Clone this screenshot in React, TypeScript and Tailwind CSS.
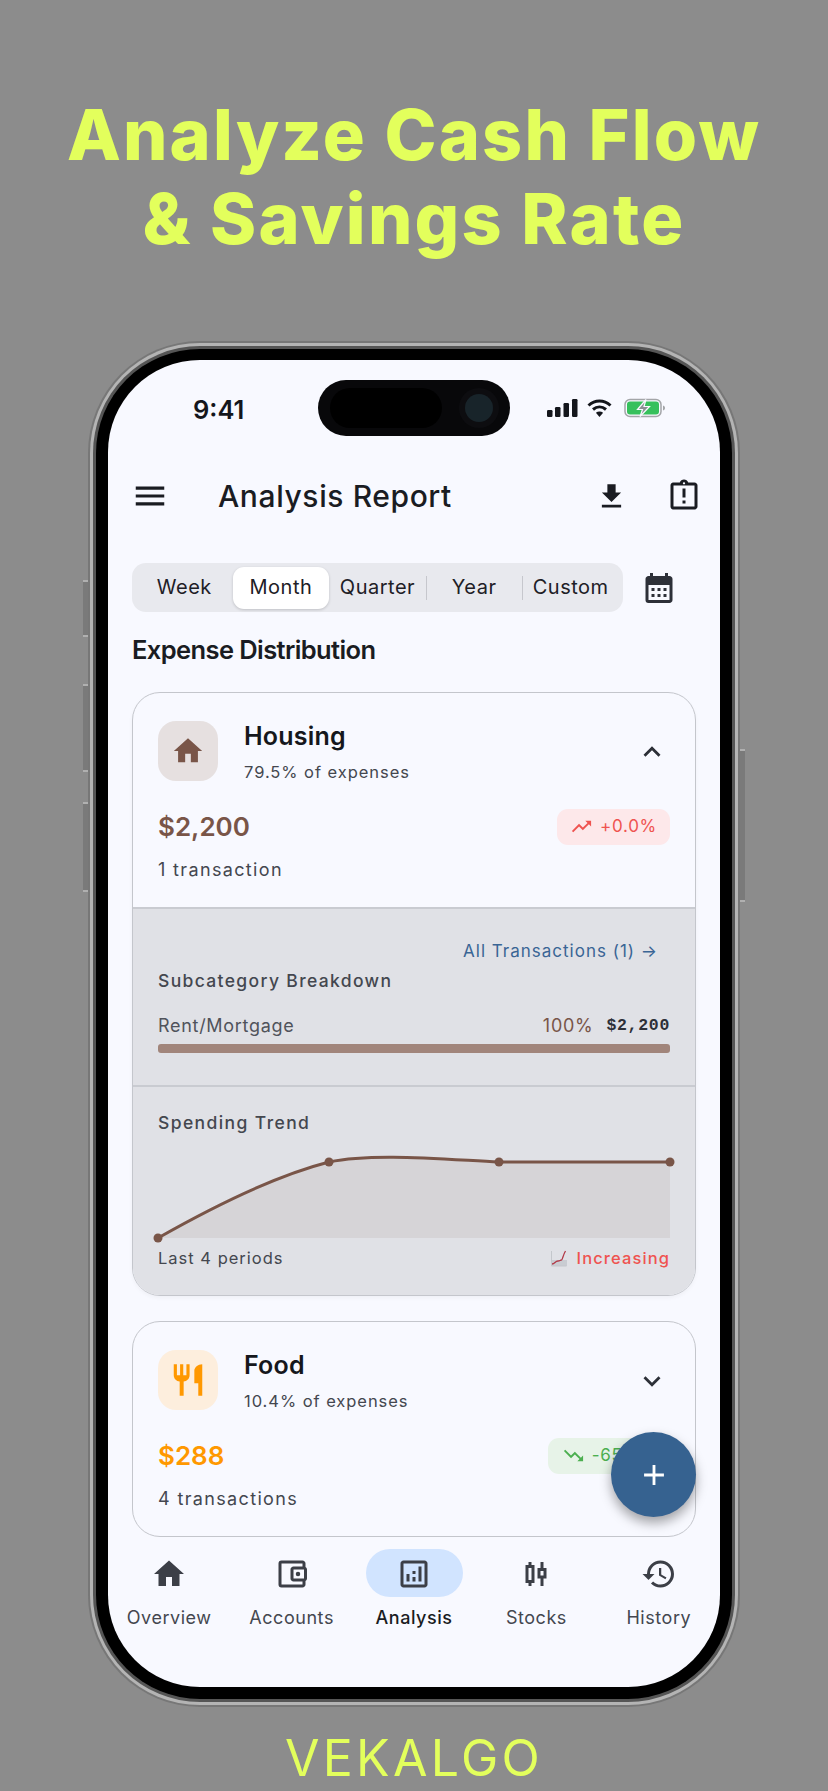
import React from 'react';
import {
  MdAdd,
  MdCalendarMonth,
  MdFileDownload,
  MdHistory,
  MdHome,
  MdKeyboardArrowDown,
  MdKeyboardArrowUp,
  MdMenu,
  MdOutlineAccountBalanceWallet,
  MdOutlineAnalytics,
  MdOutlineAssignmentLate,
  MdOutlineCandlestickChart,
  MdRestaurant,
  MdTrendingDown,
  MdTrendingUp,
} from 'react-icons/md';

const periods = ['Week', 'Month', 'Quarter', 'Year', 'Custom'];

const navItems = [
  { label: 'Overview', icon: MdHome },
  { label: 'Accounts', icon: MdOutlineAccountBalanceWallet },
  { label: 'Analysis', icon: MdOutlineAnalytics, active: true },
  { label: 'Stocks', icon: MdOutlineCandlestickChart },
  { label: 'History', icon: MdHistory },
];

const StatusIcons = () => (
  <div className="flex items-center gap-[8px]">
    <svg width="31" height="20" viewBox="0 0 31 20" fill="#14161c">
      <rect x="0" y="12" width="5.500" height="7" rx="1.200" />
      <rect x="8" y="9" width="5.500" height="10" rx="1.200" />
      <rect x="16.500" y="5" width="5.500" height="14" rx="1.200" />
      <rect x="25" y="1" width="5.500" height="18" rx="1.200" />
    </svg>
    <svg width="27" height="20" viewBox="0 0 26 20" fill="none" stroke="#14161c" strokeWidth="3">
      <path d="M2 7.500C8.500 1.500 17.500 1.500 24 7.500" />
      <path d="M6.500 11.500C10.500 8 15.500 8 19.500 11.500" />
      <path d="M13 19l-3.600-4.200c2.200-1.600 5-1.600 7.200 0z" fill="#14161c" stroke="none" />
    </svg>
    <svg width="42" height="20" viewBox="0 0 42 20" className="ml-[3px]">
      <rect x="1" y="1.500" width="36" height="17" rx="5" fill="none" stroke="#a3a5a8" strokeWidth="1.500" />
      <rect x="3" y="3.500" width="32" height="13" rx="3" fill="#36c05c" />
      <path d="M39 7.500c1.500.4 2 1.300 2 2.500s-.5 2.100-2 2.500z" fill="#a3a5a8" />
      <path d="M22 1.500 13.500 11.500h5L16 18.500 25.500 8.500h-5.500z" fill="#8d9096" stroke="#f8f9ff" strokeWidth="1.200" />
    </svg>
  </div>
);

const TrendChart = () => (
  <svg width="512" height="90" viewBox="0 0 512 90" className="block overflow-visible">
    <path d="M0 88C60 54 120 25 171 12C215 3 280 9 341 12L512 12V88Z" fill="#d6d4d7" />
    <path d="M0 88C60 54 120 25 171 12C215 3 280 9 341 12L512 12" fill="none" stroke="#795548" strokeWidth="3" />
    <circle cx="0" cy="88" r="4.500" fill="#795548" />
    <circle cx="171" cy="12" r="4.500" fill="#795548" />
    <circle cx="341" cy="12" r="4.500" fill="#795548" />
    <circle cx="512" cy="12" r="4.500" fill="#795548" />
  </svg>
);

const ChartEmoji = () => (
  <svg width="18" height="18" viewBox="0 0 18 18" className="mr-[9px] ml-auto">
    <rect x="2" y="11" width="15" height="6" fill="#c9ccd2" />
    <path d="M2 15c3 0 3-3 6-3 2 0 2-1 3.500-1 1 0 1.500-5 4-9" fill="none" stroke="#b23a48" strokeWidth="1.300" />
    <path d="M1.500 2v15h15" fill="none" stroke="#c4c7cc" strokeWidth="1" />
  </svg>
);

export default function App() {
  return (
    <div className="flex h-[1791px] w-[828px] flex-col items-center overflow-hidden bg-[#8c8c8c] font-['Inter',sans-serif]">
      <h1 className="mt-[93px] text-center text-[70px] leading-[84px] font-extrabold tracking-[2.2px] whitespace-nowrap text-[#e3ff5c]">
        Analyze Cash Flow
        <br />
        &amp; Savings Rate
      </h1>

      {/* phone frame */}
      <div className="relative mt-[80px] h-[1366px] w-[652px] rounded-[112px] bg-[#777777] p-[2px]">
        <div className="absolute top-[239px] -left-[5px] h-[57px] w-[5px] border-y-2 border-[#b0b0b0] bg-[#7a7a7a]" />
        <div className="absolute top-[343px] -left-[5px] h-[88px] w-[5px] border-y-2 border-[#b0b0b0] bg-[#7a7a7a]" />
        <div className="absolute top-[461px] -left-[5px] h-[90px] w-[5px] border-y-2 border-[#b0b0b0] bg-[#7a7a7a]" />
        <div className="absolute top-[408px] -right-[5px] h-[153px] w-[5px] border-y-2 border-[#b0b0b0] bg-[#7a7a7a]" />
        <div className="h-full rounded-[110px] bg-[#b4b4b4] p-[3px]">
          <div className="h-full rounded-[107px] bg-[#555555] p-[3px]">
            <div className="h-full rounded-[104px] bg-black px-[12px] pt-[11px] pb-[12px]">
              <div className="relative flex h-full flex-col overflow-hidden rounded-[92px] bg-[#f8f9ff]">
                {/* status bar */}
                <div className="relative mt-[20px] flex h-[56px] shrink-0 items-center justify-center">
                  <span className="absolute top-[15px] left-[85px] text-[25.5px] leading-[30px] font-semibold text-[#14161c]">9:41</span>
                  <div className="flex h-[56px] w-[192px] items-center justify-between rounded-[28px] bg-[#08080a] pr-[8px] pl-[12px]">
                    <div className="h-[40px] w-[112px] rounded-[20px] bg-black" />
                    <div className="mr-[9px] h-[28px] w-[28px] rounded-full bg-[#18242a] ring-[6px] ring-[#0d0d10]" />
                  </div>
                  <div className="absolute top-[18px] left-[439px]">
                    <StatusIcons />
                  </div>
                </div>

                {/* app bar */}
                <div className="mt-[30px] flex h-[60px] shrink-0 items-center text-[#1a1c22]">
                  <MdMenu className="ml-[23px] text-[38px]" />
                  <span className="ml-[49px] text-[30px] font-medium tracking-[0.6px]">Analysis Report</span>
                  <MdFileDownload className="ml-auto text-[33px]" />
                  <MdOutlineAssignmentLate className="mr-[18px] ml-[38px] text-[36px]" />
                </div>

                {/* period selector */}
                <div className="mt-[37px] flex shrink-0 items-center px-[24px]">
                  <div className="flex h-[49px] w-[491px] items-center rounded-[14px] bg-[#e8e9ee] px-[4px]">
                    {periods.map((p, i) => (
                      <div key={p} className="relative flex flex-1 items-center justify-center">
                        <div
                          className={`flex h-[42px] w-full items-center justify-center rounded-[11px] pb-[2px] text-[20px] tracking-[0.5px] text-[#1e2026] ${
                            p === 'Month' ? 'bg-white shadow-[0_1px_3px_rgba(0,0,0,0.18)]' : ''
                          }`}
                        >
                          {p}
                        </div>
                        {i > 2 && <div className="absolute left-0 h-[24px] w-px bg-[#c6c7cd]" />}
                      </div>
                    ))}
                  </div>
                  <MdCalendarMonth className="ml-[18px] text-[36px] text-[#2d3038]" />
                </div>

                <div className="mt-[22px] shrink-0 px-[24px] text-[25.5px] leading-[32px] font-semibold tracking-[-0.6px] text-[#1a1c22]">
                  Expense Distribution
                </div>

                {/* scrolling list */}
                <div className="mt-[26px] flex min-h-0 flex-1 flex-col gap-[25px] overflow-hidden px-[24px]">
                  <div className="h-[604px] shrink-0 overflow-hidden rounded-[28px] border border-[#c4c6cc] shadow-[0_2px_4px_rgba(0,0,0,0.04)]">
                    <div className="h-[214px] px-[25px] pt-[27px]">
                      <div className="flex items-center">
                        <div className="flex h-[60px] w-[60px] items-center justify-center rounded-[18px] bg-[#e6e0e0]">
                          <MdHome className="text-[34px] text-[#795548]" />
                        </div>
                        <div className="ml-[26px]">
                          <div className="text-[25px] leading-[32px] font-semibold tracking-[0.2px] text-[#15171c]">Housing</div>
                          <div className="mt-[10px] text-[16.5px] leading-[20px] tracking-[0.95px] text-[#44474f]">79.5% of expenses</div>
                        </div>
                        <MdKeyboardArrowUp className="mt-[2px] mr-[1px] ml-auto text-[34px] text-[#2d3038]" />
                      </div>
                      <div className="mt-[25px] flex items-center justify-between">
                        <span className="text-[26px] font-semibold text-[#795548]">$2,200</span>
                        <div className="flex h-[36px] w-[113px] items-center justify-center gap-[7px] rounded-[11px] bg-[#fde8ea] text-[17px] tracking-[0.7px] text-[#ef5350]">
                          <MdTrendingUp className="text-[23px]" />
                          +0.0%
                        </div>
                      </div>
                      <div className="mt-[12px] text-[18px] leading-[24px] tracking-[1.35px] text-[#44474f]">1 transaction</div>
                    </div>

                    <div className="h-[178px] border-t-2 border-[#c9cbd1] bg-[#e0e1e6] px-[25px]">
                      <div className="mt-[31px] flex justify-end pr-[12px] text-[17px] leading-[22px] tracking-[1px] text-[#3a6595]">
                        All Transactions (1) →
                      </div>
                      <div className="mt-[8px] text-[17.5px] leading-[22px] font-medium tracking-[1.35px] text-[#44474f]">Subcategory Breakdown</div>
                      <div className="mt-[23px] flex items-center text-[18px] leading-[22px] tracking-[0.7px] text-[#50535b]">
                        <span>Rent/Mortgage</span>
                        <span className="ml-auto text-[#795548]">100%</span>
                        <span className="ml-[13px] font-['Liberation_Mono',monospace] text-[16.5px] font-bold text-[#2d3038]">$2,200</span>
                      </div>
                      <div className="mt-[7px] h-[9px] rounded-[3px] bg-[#a1857b]" />
                    </div>

                    <div className="h-[210px] border-t-2 border-[#c9cbd1] bg-[#e0e1e6] px-[25px]">
                      <div className="mt-[25px] text-[17.5px] leading-[22px] font-medium tracking-[1.4px] text-[#44474f]">Spending Trend</div>
                      <div className="mt-[16px]">
                        <TrendChart />
                      </div>
                      <div className="mt-[6px] flex items-center text-[16.5px] leading-[24px] tracking-[1px] text-[#44474f]">
                        <span>Last 4 periods</span>
                        <ChartEmoji />
                        <span className="font-medium tracking-[1.1px] text-[#ef5350]">Increasing</span>
                      </div>
                    </div>
                  </div>

                  <div className="h-[216px] shrink-0 rounded-[28px] border border-[#c4c6cc] px-[25px] pt-[27px]">
                    <div className="flex items-center">
                      <div className="flex h-[60px] w-[60px] items-center justify-center rounded-[18px] bg-[#fdeedd]">
                        <MdRestaurant className="text-[38px] text-[#ff9800]" />
                      </div>
                      <div className="ml-[26px]">
                        <div className="text-[25px] leading-[32px] font-semibold tracking-[0.2px] text-[#15171c]">Food</div>
                        <div className="mt-[10px] text-[16.5px] leading-[20px] tracking-[0.95px] text-[#44474f]">10.4% of expenses</div>
                      </div>
                      <MdKeyboardArrowDown className="mt-[2px] mr-[1px] ml-auto text-[34px] text-[#2d3038]" />
                    </div>
                    <div className="mt-[25px] flex items-center justify-between">
                      <span className="text-[26px] font-semibold text-[#ff9800]">$288</span>
                      <div className="flex h-[36px] w-[122px] items-center justify-center gap-[7px] rounded-[11px] bg-[#e7f3e8] text-[17px] tracking-[0.7px] text-[#4caf50]">
                        <MdTrendingDown className="text-[23px]" />
                        -65.0%
                      </div>
                    </div>
                    <div className="mt-[12px] text-[18px] leading-[24px] tracking-[1.35px] text-[#44474f]">4 transactions</div>
                  </div>
                </div>

                {/* add button */}
                <div className="absolute top-[1072px] left-[503px] flex h-[85px] w-[85px] items-center justify-center rounded-full bg-[#366290] shadow-[0_6px_12px_rgba(0,0,0,0.35)]">
                  <MdAdd className="text-[34px] text-white" />
                </div>

                {/* bottom nav */}
                <div className="flex h-[148px] shrink-0 pt-[10px]">
                  {navItems.map(({ label, icon: Icon, active }) => (
                    <div key={label} className="flex flex-1 flex-col items-center">
                      <div className={`flex h-[48px] w-[97px] items-center justify-center rounded-[24px] pt-[2px] ${active ? 'bg-[#d1e4ff]' : ''}`}>
                        <Icon className="text-[36px] text-[#3c3f47]" />
                      </div>
                      <span className={`mt-[9px] text-[18px] leading-[24px] tracking-[0.55px] ${active ? 'font-medium text-[#1a1c22]' : 'text-[#44474f]'}`}>
                        {label}
                      </span>
                    </div>
                  ))}
                </div>
              </div>
            </div>
          </div>
        </div>
      </div>

      <div className="mt-[23px] text-[50px] leading-[56px] tracking-[3.3px] text-[#e3ff5c]">VEKALGO</div>
    </div>
  );
}
